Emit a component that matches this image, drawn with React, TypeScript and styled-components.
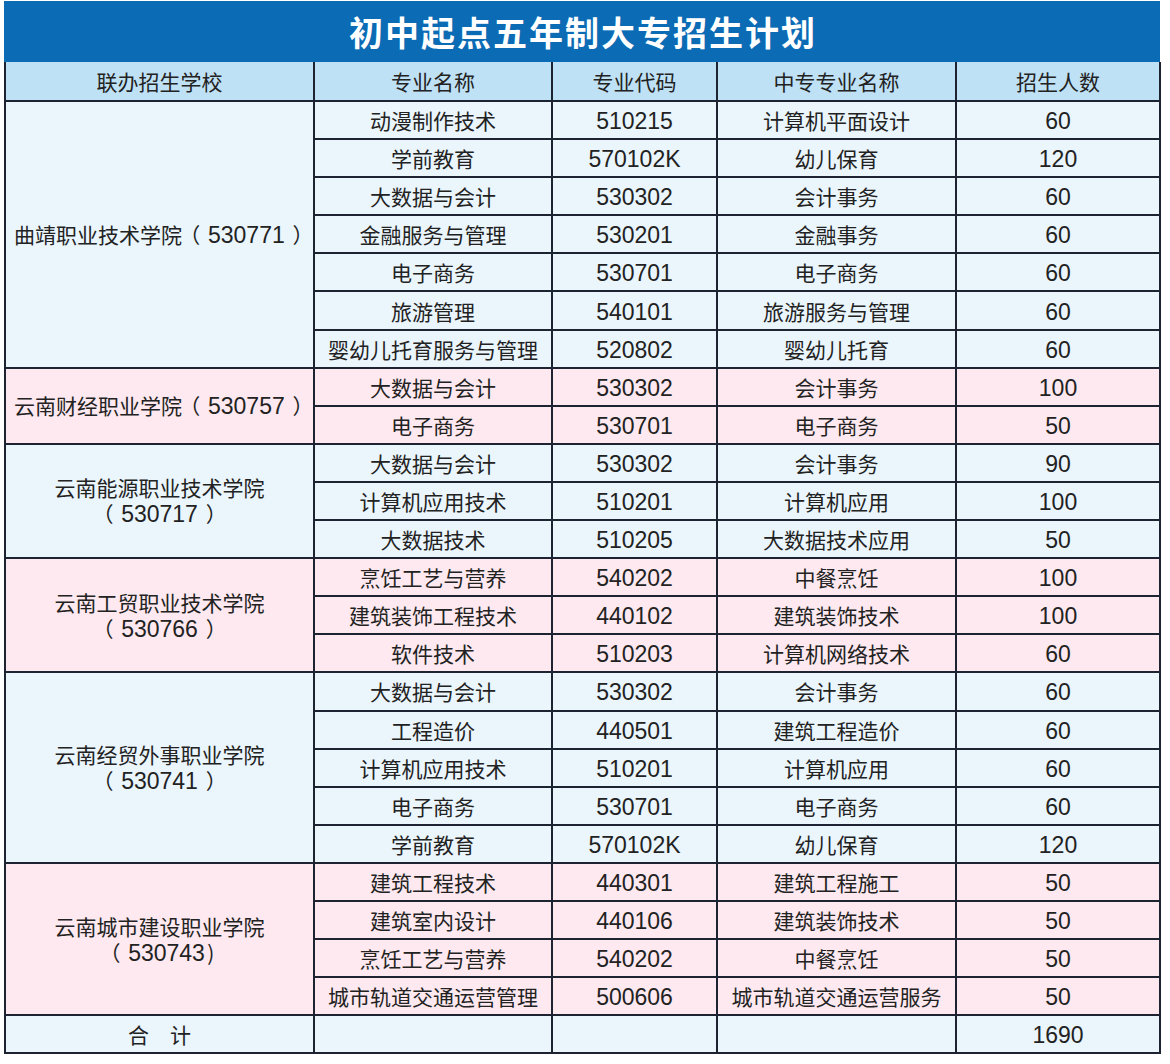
import React from "react";
import styled, { createGlobalStyle } from "styled-components";

const Global = createGlobalStyle`
  html, body { margin: 0; padding: 0; background: #ffffff; }
  body {
    font-family: "Liberation Sans", "Noto Sans CJK SC", sans-serif;
  }
`;

const Page = styled.div`
  padding: 1px 0 0 4px;
  width: 1156px;
`;

const TitleBar = styled.div`
  height: 61px;
  background: #0b6bb4;
  display: flex;
  align-items: center;
  justify-content: center;
  color: #ffffff;
  font-family: "Noto Sans CJK SC", sans-serif;
  font-weight: 700;
  font-size: 34px;
  letter-spacing: 2px;
  padding-left: 2px;
`;

const Table = styled.table`
  border-collapse: collapse;
  table-layout: fixed;
  width: 1155px;
  color: #222;
`;

const Th = styled.th`
  background: #bfe1f5;
  border: 2px solid #1d2330;
  border-top: none;
  height: 38px;
  padding: 0;
  font-weight: 400;
  font-size: 21px;
  font-family: "Noto Sans CJK SC", sans-serif;
  text-align: center;
`;

const Td = styled.td<{ $tone: "blue" | "pink"; $num?: boolean; $align?: "left" | "center" }>`
  background: ${(p) => (p.$tone === "pink" ? "#fde9ef" : "#eaf5fc")};
  border: 2px solid #1d2330;
  height: ${(p) => (p.$num ? "34.1px" : "36.1px")};
  padding: ${(p) => (p.$align === "left" ? "0 0 0 8px" : p.$num ? "2px 0 0 0" : "0")};
  text-align: ${(p) => p.$align ?? "center"};
  font-size: ${(p) => (p.$num ? "23px" : "21px")};
  font-family: ${(p) =>
    p.$num ? `"Liberation Sans", sans-serif` : `"Noto Sans CJK SC", sans-serif`};
  line-height: 26px;
  white-space: nowrap;
`;

const SchoolName = styled.span`
  font-family: "Noto Sans CJK SC", sans-serif;
  font-size: 21px;
`;

const Paren = styled.span<{ $w: number }>`
  display: inline-block;
  width: ${(p) => p.$w}px;
  text-align: center;
  font-family: "Noto Sans CJK SC", sans-serif;
  font-size: 21px;
  font-feature-settings: "halt" 1;
`;

const Code = styled.span`
  font-family: "Liberation Sans", sans-serif;
  font-size: 23px;
`;

type Row = [string, string, string, number];
type Group = { name: string; code: string; closeHalf?: boolean; twoLine: boolean; tone: "blue" | "pink"; rows: Row[] };

const groups: Group[] = [
  {
    name: "曲靖职业技术学院",
    code: "530771",
    twoLine: false,
    tone: "blue",
    rows: [
      ["动漫制作技术", "510215", "计算机平面设计", 60],
      ["学前教育", "570102K", "幼儿保育", 120],
      ["大数据与会计", "530302", "会计事务", 60],
      ["金融服务与管理", "530201", "金融事务", 60],
      ["电子商务", "530701", "电子商务", 60],
      ["旅游管理", "540101", "旅游服务与管理", 60],
      ["婴幼儿托育服务与管理", "520802", "婴幼儿托育", 60],
    ],
  },
  {
    name: "云南财经职业学院",
    code: "530757",
    twoLine: false,
    tone: "pink",
    rows: [
      ["大数据与会计", "530302", "会计事务", 100],
      ["电子商务", "530701", "电子商务", 50],
    ],
  },
  {
    name: "云南能源职业技术学院",
    code: "530717",
    twoLine: true,
    tone: "blue",
    rows: [
      ["大数据与会计", "530302", "会计事务", 90],
      ["计算机应用技术", "510201", "计算机应用", 100],
      ["大数据技术", "510205", "大数据技术应用", 50],
    ],
  },
  {
    name: "云南工贸职业技术学院",
    code: "530766",
    twoLine: true,
    tone: "pink",
    rows: [
      ["烹饪工艺与营养", "540202", "中餐烹饪", 100],
      ["建筑装饰工程技术", "440102", "建筑装饰技术", 100],
      ["软件技术", "510203", "计算机网络技术", 60],
    ],
  },
  {
    name: "云南经贸外事职业学院",
    code: "530741",
    twoLine: true,
    tone: "blue",
    rows: [
      ["大数据与会计", "530302", "会计事务", 60],
      ["工程造价", "440501", "建筑工程造价", 60],
      ["计算机应用技术", "510201", "计算机应用", 60],
      ["电子商务", "530701", "电子商务", 60],
      ["学前教育", "570102K", "幼儿保育", 120],
    ],
  },
  {
    name: "云南城市建设职业学院",
    code: "530743",
    closeHalf: true,
    twoLine: true,
    tone: "pink",
    rows: [
      ["建筑工程技术", "440301", "建筑工程施工", 50],
      ["建筑室内设计", "440106", "建筑装饰技术", 50],
      ["烹饪工艺与营养", "540202", "中餐烹饪", 50],
      ["城市轨道交通运营管理", "500606", "城市轨道交通运营服务", 50],
    ],
  },
];

const School: React.FC<{ g: Group }> = ({ g }) => {
  const close = g.closeHalf ? ")" : "）";
  const closeW = g.closeHalf ? 12 : 26;
  return (
    <>
      <SchoolName>{g.name}</SchoolName>
      {g.twoLine && <br />}
      <Paren $w={26}>（</Paren>
      <Code>{g.code}</Code>
      <Paren $w={closeW}>{close}</Paren>
    </>
  );
};

export default function App() {
  return (
    <>
      <Global />
      <Page>
        <TitleBar>初中起点五年制大专招生计划</TitleBar>
        <Table>
          <colgroup>
            <col style={{ width: 309 }} />
            <col style={{ width: 238 }} />
            <col style={{ width: 165 }} />
            <col style={{ width: 239 }} />
            <col style={{ width: 204 }} />
          </colgroup>
          <thead>
            <tr>
              <Th>联办招生学校</Th>
              <Th>专业名称</Th>
              <Th>专业代码</Th>
              <Th>中专专业名称</Th>
              <Th>招生人数</Th>
            </tr>
          </thead>
          <tbody>
            {groups.map((g) =>
              g.rows.map((r, i) => (
                <tr key={g.name + i}>
                  {i === 0 && (
                    <Td $tone={g.tone} rowSpan={g.rows.length} $align={g.twoLine ? "center" : "left"}>
                      <School g={g} />
                    </Td>
                  )}
                  <Td $tone={g.tone}>{r[0]}</Td>
                  <Td $tone={g.tone} $num>{r[1]}</Td>
                  <Td $tone={g.tone}>{r[2]}</Td>
                  <Td $tone={g.tone} $num>{r[3]}</Td>
                </tr>
              ))
            )}
            <tr>
              <Td $tone="blue">合{"\u3000"}计</Td>
              <Td $tone="blue"></Td>
              <Td $tone="blue"></Td>
              <Td $tone="blue"></Td>
              <Td $tone="blue" $num>1690</Td>
            </tr>
          </tbody>
        </Table>
      </Page>
    </>
  );
}
